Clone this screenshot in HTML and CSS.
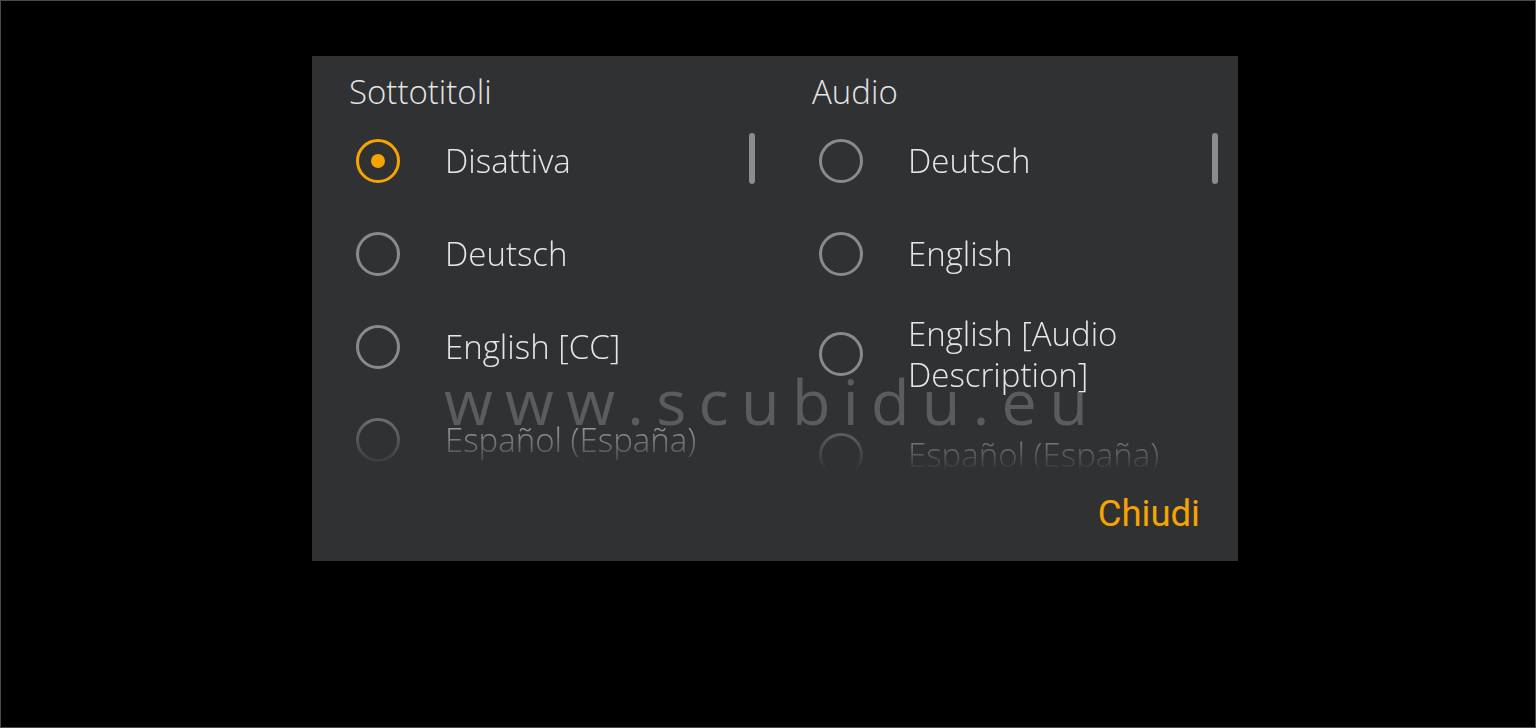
FILE: index.html
```html
<!DOCTYPE html>
<html>
<head>
    <title>Sottotitoli e audio</title>
    <link rel="stylesheet" href="styles.css">
</head>
<body>
    <div class="dialog">
        <div class="columns">
            <div class="column">
                <div class="col-title">Sottotitoli</div>
                <div class="list-wrap">
                    <ul class="list">
                        <li class="row"><span class="radio checked"></span><span class="label">Disattiva</span></li>
                        <li class="row"><span class="radio"></span><span class="label">Deutsch</span></li>
                        <li class="row"><span class="radio"></span><span class="label">English [CC]</span></li>
                        <li class="row"><span class="radio"></span><span class="label">Español (España)</span></li>
                    </ul>
                    <div class="thumb"></div>
                </div>
            </div>
            <div class="column">
                <div class="col-title">Audio</div>
                <div class="list-wrap">
                    <ul class="list">
                        <li class="row"><span class="radio"></span><span class="label">Deutsch</span></li>
                        <li class="row"><span class="radio"></span><span class="label">English</span></li>
                        <li class="row"><span class="radio"></span><span class="label">English [Audio Description]</span></li>
                        <li class="row"><span class="radio"></span><span class="label">Español (España)</span></li>
                    </ul>
                    <div class="thumb"></div>
                </div>
            </div>
        </div>
        <div class="footer">
            <button class="close">Chiudi</button>
        </div>
        <div class="watermark">www.scubidu.eu</div>
    </div>
</body>
</html>
```

FILE: styles.css
```css
html, body {
    margin: 0;
    height: 100%;
}

body {
    box-sizing: border-box;
    height: 728px;
    background: #000;
    border: 1px solid #4a4a4a;
    padding: 55px 0 0 311px;
    font-family: "Open Sans", "Noto Sans", sans-serif;
    overflow: hidden;
}

.dialog {
    position: relative;
    width: 926px;
    height: 505px;
    box-sizing: border-box;
    background: #303133;
    padding: 0 0 0 37px;
}

.columns {
    display: grid;
    grid-template-columns: 463px 463px;
}

.col-title {
    color: #e4e4e4;
    font-size: 33px;
    font-weight: 300;
    height: 58px;
    line-height: 40px;
    padding-top: 16px;
    box-sizing: border-box;
}

.list-wrap {
    display: flex;
    height: 358px;
    overflow: hidden;
    -webkit-mask-image: linear-gradient(to bottom, #000 280px, transparent 358px);
    mask-image: linear-gradient(to bottom, #000 280px, transparent 358px);
}

.list {
    list-style: none;
    margin: 0;
    padding: 0;
    width: 400px;
}

.row {
    display: flex;
    align-items: center;
    min-height: 93px;
    box-sizing: border-box;
    padding: 13px 0;
}

.radio {
    flex: none;
    width: 44px;
    height: 44px;
    box-sizing: border-box;
    border: 3px solid #8a8a8a;
    border-radius: 50%;
    margin-left: 7px;
    margin-right: 45px;
    display: flex;
    align-items: center;
    justify-content: center;
}

.radio.checked {
    border-color: #f7a300;
}

.radio.checked::after {
    content: "";
    width: 14px;
    height: 14px;
    border-radius: 50%;
    background: #f7a300;
}

.label {
    color: #e6e6e6;
    font-size: 33px;
    font-weight: 300;
    line-height: 41px;
}

.thumb {
    flex: none;
    width: 6px;
    height: 51px;
    margin-top: 19px;
    border-radius: 3px;
    background: #8c8c8c;
}

.footer {
    display: flex;
    justify-content: flex-end;
    padding: 17px 38px 0 0;
}

.close {
    background: none;
    border: none;
    padding: 0;
    color: #f7a300;
    font-family: Roboto, "Noto Sans", sans-serif;
    font-size: 36.5px;
    line-height: 50px;
    cursor: pointer;
}

.watermark {
    position: absolute;
    left: 132px;
    top: 305px;
    color: rgba(140, 140, 140, 0.47);
    font-size: 63px;
    font-weight: 500;
    letter-spacing: 12.3px;
    line-height: 80px;
    pointer-events: none;
}
```
